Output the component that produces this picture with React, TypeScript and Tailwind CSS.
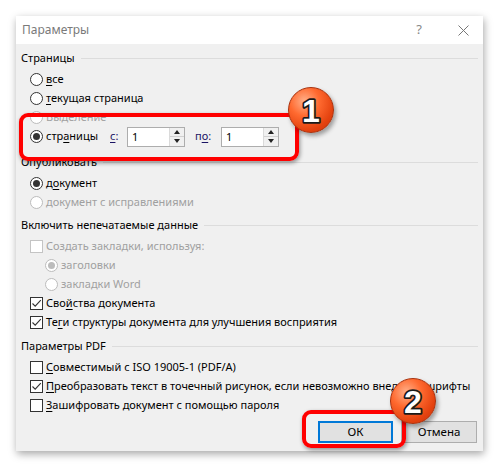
import type { ReactNode } from 'react'

const font = "font-['Noto_Sans','Open_Sans',sans-serif]"

function U({ children }: { children: ReactNode }) {
  return <span className="underline underline-offset-[2px] decoration-1">{children}</span>
}

function Radio({ checked, disabled }: { checked?: boolean; disabled?: boolean }) {
  return (
    <span
      className={`flex h-[13px] w-[13px] shrink-0 items-center justify-center rounded-full border bg-white ${
        disabled ? 'border-[#bcbcbc]' : 'border-[#333]'
      }`}
    >
      {checked && (
        <span className={`h-[7px] w-[7px] rounded-full ${disabled ? 'bg-[#bcbcbc]' : 'bg-[#333]'}`} />
      )}
    </span>
  )
}

function Check({ checked, disabled }: { checked?: boolean; disabled?: boolean }) {
  return (
    <span
      className={`flex h-[13px] w-[13px] shrink-0 items-center justify-center border bg-white ${
        disabled ? 'border-[#c4c4c4]' : 'border-[#333]'
      }`}
    >
      {checked && (
        <svg width="11" height="11" viewBox="0 0 11 11">
          <polyline points="1.5,5.5 4.2,8.2 9.8,2.2" fill="none" stroke="#333" strokeWidth="1.1" />
        </svg>
      )}
    </span>
  )
}

function Row({
  children,
  indent = 'pl-[9px]',
  disabled,
}: {
  children: ReactNode
  indent?: string
  disabled?: boolean
}) {
  return (
    <div
      className={`flex h-[19px] items-center gap-[3px] ${indent} ${
        disabled ? 'text-[#a0a0a0]' : 'text-black'
      }`}
    >
      {children}
    </div>
  )
}

function Section({ title, children, className = '' }: { title: string; children: ReactNode; className?: string }) {
  return (
    <div className={className}>
      <div className="flex h-[19px] items-center gap-[6px]">
        <span>{title}</span>
        <span className="h-px flex-1 bg-[#dcdcdc]" />
      </div>
      <div className="mt-[2px]">{children}</div>
    </div>
  )
}

function Spinner() {
  return (
    <div className="flex h-[20px] w-[58px] border border-[#adadad] bg-white">
      <span className="flex-1 pl-[4px] leading-[18px]">1</span>
      <div className="flex w-[15px] flex-col border-l border-[#dadada] bg-[#f0f0f0]">
        <div className="flex flex-1 items-center justify-center border-b border-[#d0d0d0]">
          <span className="h-0 w-0 border-x-[3.5px] border-b-[4px] border-x-transparent border-b-[#222]" />
        </div>
        <div className="flex flex-1 items-center justify-center">
          <span className="h-0 w-0 border-x-[3.5px] border-t-[4px] border-x-transparent border-t-[#222]" />
        </div>
      </div>
    </div>
  )
}

function Badge({ n, className }: { n: string; className: string }) {
  return (
    <div
      className={`absolute flex h-[46px] w-[46px] items-center justify-center rounded-full border border-[#a8300c] bg-[radial-gradient(circle_at_35%_30%,#ffb08a_0%,#ff6a30_35%,#e4420f_70%,#c8320a_100%)] shadow-[2px_3px_4px_rgba(0,0,0,0.35)] ${className}`}
    >
      <svg width="40" height="40" viewBox="0 0 40 40">
        <text
          x="20"
          y="32"
          textAnchor="middle"
          fontFamily="Liberation Sans, Arial, sans-serif"
          fontWeight="bold"
          fontSize="32"
          fill="#fff"
          stroke="#1a1a1a"
          strokeWidth="3.5"
          strokeLinejoin="round"
          paintOrder="stroke"
        >
          {n}
        </text>
      </svg>
    </div>
  )
}

export default function App() {
  return (
    <div className={`relative h-[467px] w-[499px] overflow-hidden bg-white text-[11px] ${font}`}>
      <div className="ml-[16px] mt-[16px] flex h-[435px] w-[467px] flex-col bg-[#f0f0f0] shadow-[1px_3px_8px_rgba(0,0,0,0.35)]">
        {/* Title bar */}
        <div className="flex h-[28px] items-center bg-white pl-[6px] pr-[14px] text-[#7a7a7a]">
          <span className="flex-1 text-[12px]">Параметры</span>
          <span className="mr-[36px] text-[13px] text-[#888]">?</span>
          <svg width="11" height="11" viewBox="0 0 11 11">
            <path d="M0.5 0.5 L10.5 10.5 M10.5 0.5 L0.5 10.5" stroke="#777" strokeWidth="1" />
          </svg>
        </div>

        {/* Body */}
        <div className="flex flex-1 flex-col px-[5px] pt-[5px]">
          <Section title="Страницы">
            <Row>
              <Radio />
              <span>
                <U>в</U>се
              </span>
            </Row>
            <Row>
              <Radio />
              <span>
                <U>т</U>екущая страница
              </span>
            </Row>
            <Row disabled>
              <Radio disabled />
              <span>Выделение</span>
            </Row>
            <div className="flex h-[19px] items-center pl-[9px]">
              <Radio checked />
              <span className="ml-[3px] w-[64px]">
                стр<U>а</U>ницы
              </span>
              <span className="w-[17px] text-[#1b1464]">
                <U>с</U>:
              </span>
              <Spinner />
              <span className="ml-[10px] w-[26px] text-[#1b1464]">
                п<U>о</U>:
              </span>
              <Spinner />
            </div>
          </Section>

          <Section title="Опубликовать" className="mt-[7px]">
            <Row>
              <Radio checked />
              <span>
                д<U>о</U>кумент
              </span>
            </Row>
            <Row disabled>
              <Radio disabled />
              <span>документ с исправлениями</span>
            </Row>
          </Section>

          <Section title="Включить непечатаемые данные" className="mt-[4px]">
            <Row disabled>
              <Check disabled />
              <span>Создать закладки, используя:</span>
            </Row>
            <Row disabled indent="pl-[24px]">
              <Radio checked disabled />
              <span>заголовки</span>
            </Row>
            <Row disabled indent="pl-[24px]">
              <Radio disabled />
              <span>закладки Word</span>
            </Row>
            <Row>
              <Check checked />
              <span>
                Сво<U>й</U>ства документа
              </span>
            </Row>
            <Row>
              <Check checked />
              <span>
                Те<U>г</U>и структуры документа для улучшения восприятия
              </span>
            </Row>
          </Section>

          <Section title="Параметры PDF" className="mt-[5px]">
            <Row>
              <Check />
              <span>
                <U>С</U>овместимый с ISO 19005-1 (PDF/A)
              </span>
            </Row>
            <Row>
              <Check checked />
              <span className="whitespace-nowrap">
                <U>П</U>реобразовать текст в точечный рисунок, если невозможно внедрить шрифты
              </span>
            </Row>
            <Row>
              <Check />
              <span>
                <U>З</U>ашифровать документ с помощью пароля
              </span>
            </Row>
          </Section>

          <div className="mt-[6px] flex justify-end gap-[8px] pr-[1px]">
            <button className="h-[22px] w-[75px] border-2 border-[#0078d7] bg-[#e1e1e1] text-[11.5px] text-black">ОК</button>
            <button className="h-[22px] w-[76px] border border-[#adadad] bg-[#e1e1e1] text-[11.5px] text-black">Отмена</button>
          </div>
        </div>
      </div>

      {/* Highlights */}
      <div className="absolute left-[19px] top-[113px] h-[48px] w-[280px] rounded-[9px] border-[4px] border-[#f00] shadow-[1px_2px_4px_rgba(0,0,0,0.4)]" />
      <div className="absolute left-[302px] top-[410px] h-[38px] w-[104px] rounded-[9px] border-[4px] border-[#f00] shadow-[1px_2px_4px_rgba(0,0,0,0.4)]" />
      <Badge n="1" className="left-[288px] top-[87px]" />
      <Badge n="2" className="left-[390px] top-[378px]" />
    </div>
  )
}
